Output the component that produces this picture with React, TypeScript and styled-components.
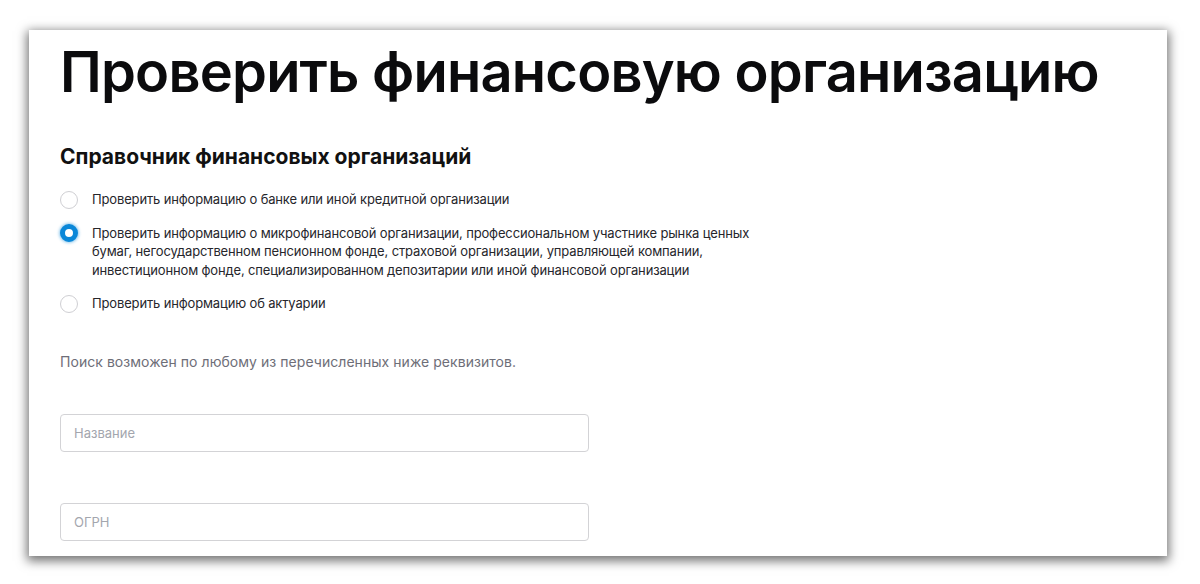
import React from "react";
import styled, { createGlobalStyle } from "styled-components";

const Global = createGlobalStyle`
  html, body { margin: 0; padding: 0; background: #ffffff; }
  body { font-family: Inter, "Noto Sans", Arial, sans-serif; -webkit-font-smoothing: antialiased; }
  * { box-sizing: border-box; }
`;

const Page = styled.div`
  width: 1200px;
  height: 584px;
  padding: 30px 0 0 29px;
  overflow: hidden;
`;

const Card = styled.div`
  width: 1138px;
  height: 526px;
  background: #fff;
  box-shadow: 0 3px 10px 2px rgba(0, 0, 0, 0.55);
  padding: 7px 0 0 31px;
  overflow: hidden;
`;

const Title = styled.h1`
  margin: 0;
  font-family: Inter, "Noto Sans", sans-serif;
  font-weight: 600;
  font-size: 56px;
  line-height: 70px;
  letter-spacing: -0.8px;
  white-space: nowrap;
  color: #0b0b0d;
`;

const Subtitle = styled.h2`
  margin: 37px 0 0;
  font-weight: 700;
  font-size: 21px;
  line-height: 26px;
  color: #111;
`;

const RadioList = styled.div`
  margin-top: 20px;
  display: flex;
  flex-direction: column;
  gap: 15px;
`;

const RadioRow = styled.label`
  display: flex;
  align-items: flex-start;
  gap: 14px;
  cursor: pointer;
`;

const Circle = styled.span<{ $checked?: boolean }>`
  flex: none;
  width: 18px;
  height: 18px;
  border-radius: 50%;
  border: ${(p) => (p.$checked ? "5.5px solid #0a87d8" : "1px solid #cfcfd3")};
  background: #fff;
  box-shadow: ${(p) => (p.$checked ? "0 0 3px 1px rgba(10,135,216,0.45)" : "none")};
  margin-top: 0.5px;
`;

const RadioText = styled.span`
  font-size: 13px;
  line-height: 18.5px;
  letter-spacing: -0.15px;
  color: #26262b;
  max-width: 672px;
`;

const Hint = styled.p`
  margin: 39px 0 0;
  font-size: 14px;
  line-height: 20px;
  letter-spacing: 0.05px;
  color: #6e6e78;
`;

const Field = styled.input<{ $gap: number }>`
  display: block;
  margin-top: ${(p) => p.$gap}px;
  width: 529px;
  height: 38px;
  border: 1px solid #d3d3d6;
  border-radius: 4px;
  padding: 0 13px;
  font-family: Inter, "Noto Sans", sans-serif;
  font-size: 13px;
  color: #222;
  outline: none;
  &::placeholder { color: #a3a6ae; }
`;

const options = [
  "Проверить информацию о банке или иной кредитной организации",
  "Проверить информацию о микрофинансовой организации, профессиональном участнике рынка ценных бумаг, негосударственном пенсионном фонде, страховой организации, управляющей компании, инвестиционном фонде, специализированном депозитарии или иной финансовой организации",
  "Проверить информацию об актуарии",
];

export default function App() {
  const [sel, setSel] = React.useState(1);
  return (
    <>
      <Global />
      <Page>
        <Card>
          <Title>Проверить финансовую организацию</Title>
          <Subtitle>Справочник финансовых организаций</Subtitle>
          <RadioList>
            {options.map((o, i) => (
              <RadioRow key={i} onClick={() => setSel(i)}>
                <Circle $checked={sel === i} />
                <RadioText>{o}</RadioText>
              </RadioRow>
            ))}
          </RadioList>
          <Hint>Поиск возможен по любому из перечисленных ниже реквизитов.</Hint>
          <Field $gap={42} placeholder="Название" />
          <Field $gap={51} placeholder="ОГРН" />
        </Card>
      </Page>
    </>
  );
}
